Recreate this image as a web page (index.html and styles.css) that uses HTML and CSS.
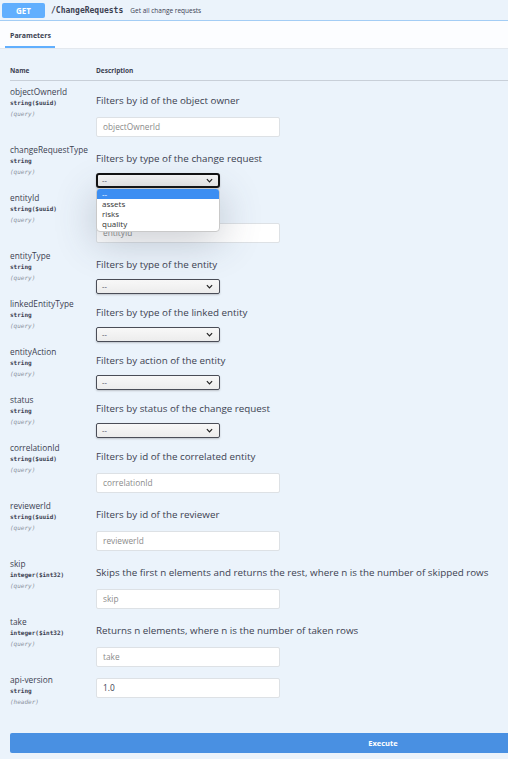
FILE: index.html
```html
<!DOCTYPE html>
<html>
<head>
<meta charset="utf-8">
<link rel="stylesheet" href="styles.css">
</head>
<body>
<div class="opblock">
  <div class="summary">
    <span class="method">GET</span>
    <span class="path">/ChangeRequests</span>
    <span class="summary-desc">Get all change requests</span>
  </div>
  <div class="section-header">
    <div class="tab">Parameters</div>
  </div>
  <div class="params">
    <div class="head">
      <div class="col-name">Name</div>
      <div class="col-desc">Description</div>
    </div>
    <div class="rows">
      <div class="row row-input">
        <div class="pname"><div class="n">objectOwnerId</div><div class="t">string($uuid)</div><div class="i">(query)</div></div>
        <div class="pdesc"><div class="d">Filters by id of the object owner</div><div class="input placeholder">objectOwnerId</div></div>
      </div>
      <div class="row row-select">
        <div class="pname"><div class="n">changeRequestType</div><div class="t">string</div><div class="i">(query)</div></div>
        <div class="pdesc"><div class="d">Filters by type of the change request</div>
          <div class="select focused"><span>--</span><svg class="chev" viewBox="0 0 8 5" width="7" height="5"><path d="M1 1 L4 4 L7 1" fill="none" stroke="#222" stroke-width="1.4"/></svg>
            <div class="popup">
              <div class="opt sel">--</div>
              <div class="opt">assets</div>
              <div class="opt">risks</div>
              <div class="opt">quality</div>
            </div>
          </div>
        </div>
      </div>
      <div class="row row-input">
        <div class="pname"><div class="n">entityId</div><div class="t">string($uuid)</div><div class="i">(query)</div></div>
        <div class="pdesc"><div class="d">Filters by id of the entity</div><div class="input placeholder">entityId</div></div>
      </div>
      <div class="row row-select">
        <div class="pname"><div class="n">entityType</div><div class="t">string</div><div class="i">(query)</div></div>
        <div class="pdesc"><div class="d">Filters by type of the entity</div>
          <div class="select"><span>--</span><svg class="chev" viewBox="0 0 8 5" width="7" height="5"><path d="M1 1 L4 4 L7 1" fill="none" stroke="#222" stroke-width="1.4"/></svg></div>
        </div>
      </div>
      <div class="row row-select">
        <div class="pname"><div class="n">linkedEntityType</div><div class="t">string</div><div class="i">(query)</div></div>
        <div class="pdesc"><div class="d">Filters by type of the linked entity</div>
          <div class="select"><span>--</span><svg class="chev" viewBox="0 0 8 5" width="7" height="5"><path d="M1 1 L4 4 L7 1" fill="none" stroke="#222" stroke-width="1.4"/></svg></div>
        </div>
      </div>
      <div class="row row-select">
        <div class="pname"><div class="n">entityAction</div><div class="t">string</div><div class="i">(query)</div></div>
        <div class="pdesc"><div class="d">Filters by action of the entity</div>
          <div class="select"><span>--</span><svg class="chev" viewBox="0 0 8 5" width="7" height="5"><path d="M1 1 L4 4 L7 1" fill="none" stroke="#222" stroke-width="1.4"/></svg></div>
        </div>
      </div>
      <div class="row row-select">
        <div class="pname"><div class="n">status</div><div class="t">string</div><div class="i">(query)</div></div>
        <div class="pdesc"><div class="d">Filters by status of the change request</div>
          <div class="select"><span>--</span><svg class="chev" viewBox="0 0 8 5" width="7" height="5"><path d="M1 1 L4 4 L7 1" fill="none" stroke="#222" stroke-width="1.4"/></svg></div>
        </div>
      </div>
      <div class="row row-input">
        <div class="pname"><div class="n">correlationId</div><div class="t">string($uuid)</div><div class="i">(query)</div></div>
        <div class="pdesc"><div class="d">Filters by id of the correlated entity</div><div class="input placeholder">correlationId</div></div>
      </div>
      <div class="row row-input">
        <div class="pname"><div class="n">reviewerId</div><div class="t">string($uuid)</div><div class="i">(query)</div></div>
        <div class="pdesc"><div class="d">Filters by id of the reviewer</div><div class="input placeholder">reviewerId</div></div>
      </div>
      <div class="row row-input">
        <div class="pname"><div class="n">skip</div><div class="t">integer($int32)</div><div class="i">(query)</div></div>
        <div class="pdesc"><div class="d">Skips the first n elements and returns the rest, where n is the number of skipped rows</div><div class="input placeholder">skip</div></div>
      </div>
      <div class="row row-input">
        <div class="pname"><div class="n">take</div><div class="t">integer($int32)</div><div class="i">(query)</div></div>
        <div class="pdesc"><div class="d">Returns n elements, where n is the number of taken rows</div><div class="input placeholder">take</div></div>
      </div>
      <div class="row row-header">
        <div class="pname"><div class="n">api-version</div><div class="t">string</div><div class="i">(header)</div></div>
        <div class="pdesc"><div class="input value">1.0</div></div>
      </div>
    </div>
  </div>
  <div class="execute-wrap">
    <div class="execute">Execute</div>
  </div>
</div>
</body>
</html>
```
FILE: styles.css
```css
html, body {
  margin: 0;
  padding: 0;
  width: 508px;
  height: 759px;
  overflow: hidden;
}
body {
  background: #ebf3fb;
  font-family: "Open Sans", "Liberation Sans", sans-serif;
  color: #3b4151;
}
.opblock {
  width: 760px;
}
.summary {
  display: flex;
  align-items: center;
  height: 20px;
  padding-left: 2px;
  border-bottom: 1px solid #a3cdf5;
}
.method {
  width: 43px;
  height: 15px;
  background: #61affe;
  color: #fff;
  font-size: 8px;
  font-weight: 700;
  display: flex;
  align-items: center;
  justify-content: center;
  border-radius: 2px;
}
.path {
  margin-left: 6px;
  font-family: "DejaVu Sans Mono", monospace;
  font-weight: 700;
  font-size: 8px;
  color: #3b4151;
}
.summary-desc {
  margin-left: 7px;
  font-size: 6.5px;
  color: #3b4151;
}
.section-header {
  height: 27px;
  background: #fcfdff;
  border-bottom: 1px solid #e3e8ee;
  padding-left: 5px;
  display: flex;
  align-items: flex-end;
}
.tab {
  padding: 0 4px 5px 5px;
  line-height: 11px;
  font-size: 7px;
  font-weight: 700;
  border-bottom: 2px solid #61affe;
}
.params {
  padding-left: 10px;
}
.head {
  display: grid;
  grid-template-columns: 86px 1fr;
  padding: 16px 0 4px;
  line-height: 11px;
  font-size: 6.5px;
  font-weight: 700;
  border-bottom: 1px solid #c8cfd8;
}
.rows {
  padding-top: 5px;
}
.row {
  display: grid;
  grid-template-columns: 86px 1fr;
}
.pname .n {
  font-size: 8.3px;
  line-height: 11px;
  white-space: nowrap;
}
.pname .t {
  font-family: "DejaVu Sans Mono", monospace;
  font-weight: 700;
  font-size: 6px;
  line-height: 11px;
}
.pname .i {
  font-family: "DejaVu Sans Mono", monospace;
  font-style: italic;
  font-size: 6px;
  line-height: 11px;
  color: #8a909b;
}
.pdesc {
  display: flex;
  flex-direction: column;
  align-items: flex-start;
}
.pdesc .d {
  margin-top: 9px;
  font-size: 9.8px;
  line-height: 11px;
  white-space: nowrap;
}
.input {
  box-sizing: border-box;
  width: 184px;
  height: 20px;
  margin-top: 10.5px;
  margin-bottom: 7.5px;
  background: #fff;
  border: 1px solid #dde1e5;
  border-radius: 2px;
  padding-left: 6px;
  display: flex;
  align-items: center;
  font-size: 8.3px;
}
.input.placeholder {
  color: #8b8b8b;
}
.input.value {
  color: #3b4151;
}
.row-header .input {
  margin-top: 3.5px;
  margin-bottom: 0;
}
.row-header {
  height: 58px;
}
.select {
  position: relative;
  box-sizing: border-box;
  width: 124px;
  height: 15px;
  margin-top: 8.5px;
  margin-bottom: 4.5px;
  border: 1px solid #4a4d57;
  border-radius: 2px;
  background: linear-gradient(#f8f8f8, #ececec);
  box-shadow: 0 1px 2px rgba(0, 0, 0, 0.2);
  display: flex;
  align-items: center;
  justify-content: space-between;
  padding: 0 6px 0 5px;
  font-size: 7.5px;
  color: #3b4151;
}
.select.focused {
  border: 2px solid #111;
  border-radius: 3px;
  padding: 0 5px 0 4px;
}
.chev {
  display: block;
}
.popup {
  position: absolute;
  left: -2px;
  top: 13px;
  width: 124px;
  box-sizing: border-box;
  padding: 0 0 2px;
  background: #fff;
  border: 1px solid #c9c9c9;
  border-radius: 4px;
  overflow: hidden;
  box-shadow: 0 8px 40px rgba(60, 70, 90, 0.3);
  z-index: 5;
}
.opt {
  height: 10px;
  line-height: 10px;
  padding-left: 5px;
  font-size: 8px;
  color: #333;
}
.opt.sel {
  background: #3c8ef2;
  color: #fff;
}
.execute-wrap {
  padding: 1px 0 0 10px;
}
.execute {
  width: 746px;
  height: 20px;
  background: #4990e2;
  border-radius: 2px;
  color: #fff;
  font-size: 7.5px;
  font-weight: 700;
  display: flex;
  align-items: center;
  justify-content: center;
}
```
